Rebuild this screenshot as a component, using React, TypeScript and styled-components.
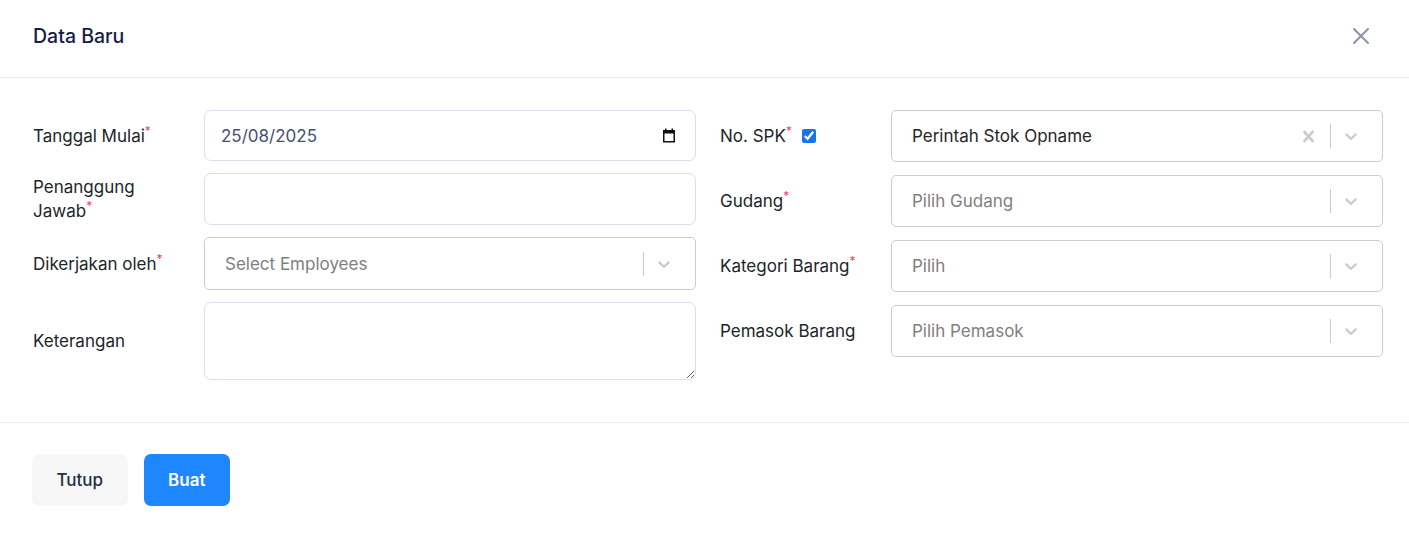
import React from "react";
import styled, { createGlobalStyle } from "styled-components";

const GlobalStyle = createGlobalStyle`
  html, body {
    margin: 0;
    padding: 0;
    background: #ffffff;
    font-family: Inter, "Noto Sans", "Liberation Sans", sans-serif;
  }
  * {
    box-sizing: border-box;
  }
`;

const Modal = styled.div`
  width: 1409px;
  background: #fff;
  display: flex;
  flex-direction: column;
  > * {
    flex-shrink: 0;
  }
`;

const Header = styled.div`
  height: 78px;
  display: flex;
  align-items: center;
  justify-content: space-between;
  padding: 0 37px 0 33px;
  border-bottom: 1px solid #e9ebf0;
`;

const Title = styled.h5`
  margin: 0;
  font-size: 19.5px;
  font-weight: 500;
  color: #14204a;
  padding-bottom: 6px;
`;

const CloseButton = styled.button`
  border: none;
  background: transparent;
  padding: 0;
  width: 22px;
  height: 22px;
  display: flex;
  align-items: center;
  justify-content: center;
  color: #8b93ab;
  cursor: pointer;
  margin-bottom: 5px;
`;

const Body = styled.div`
  display: grid;
  grid-template-columns: 1fr 1fr;
  column-gap: 24px;
  padding: 32px 26px 42px 33px;
  border-bottom: 1px solid #eef0f3;
`;

const Column = styled.div<{ $gap: number }>`
  display: flex;
  flex-direction: column;
  gap: ${(p) => p.$gap}px;
`;

const Row = styled.div`
  display: grid;
  grid-template-columns: 171px 1fr;
  align-items: center;
`;

const Label = styled.label`
  font-size: 17px;
  line-height: 24px;
  color: #212529;
  display: flex;
  align-items: center;
  gap: 10px;
  padding-right: 24px;
`;

const Req = styled.sup`
  color: #f0436a;
  font-size: 12px;
  line-height: 0;
  vertical-align: super;
`;

const Check = styled.input`
  width: 14px;
  height: 14px;
  margin: 0;
  accent-color: #1a73e8;
`;

const FieldBox = styled.div<{ $h: number }>`
  height: ${(p) => p.$h}px;
  border: 1px solid #dcdeec;
  border-radius: 7px;
  display: flex;
  align-items: center;
  padding: 0 19px 0 16px;
  background: #fff;
`;

const PlainInput = styled.input`
  flex: 1;
  border: none;
  outline: none;
  background: transparent;
  font-family: inherit;
  font-size: 17px;
  color: #465073;
  padding: 0;
  min-width: 0;
`;

const TextArea = styled.textarea`
  height: 78px;
  border: 1px solid #dcdeec;
  border-radius: 7px;
  font-family: inherit;
  font-size: 17px;
  padding: 12px 16px;
  resize: vertical;
  outline: none;
  display: block;
  width: 100%;
`;

const Select = styled.div<{ $h: number }>`
  height: ${(p) => p.$h}px;
  border: 1px solid #cccccc;
  border-radius: 5px;
  display: flex;
  align-items: center;
  background: #fff;
`;

const SelectValue = styled.div<{ $placeholder?: boolean }>`
  flex: 1;
  padding-left: 20px;
  font-size: 17px;
  color: ${(p) => (p.$placeholder ? "#808080" : "#262626")};
  white-space: nowrap;
  overflow: hidden;
`;

const Indicators = styled.div`
  display: flex;
  align-items: center;
  height: 100%;
  padding-right: 11px;
`;

const Indicator = styled.span<{ $w: number }>`
  width: ${(p) => p.$w}px;
  display: flex;
  align-items: center;
  justify-content: center;
  color: #cccccc;
`;

const Separator = styled.span`
  width: 1px;
  height: 24px;
  background: #cccccc;
`;

const Footer = styled.div`
  display: flex;
  gap: 16px;
  padding: 31px 32px;
`;

const Button = styled.button<{ $primary?: boolean }>`
  height: 52px;
  padding: 0 24.5px;
  border: none;
  border-radius: 7px;
  font-family: inherit;
  font-size: 17px;
  font-weight: ${(p) => (p.$primary ? 600 : 500)};
  background: ${(p) => (p.$primary ? "#1e86ff" : "#f7f7f8")};
  color: ${(p) => (p.$primary ? "#ffffff" : "#272d43")};
  cursor: pointer;
`;

const Chevron = () => (
  <svg width="20" height="20" viewBox="0 0 20 20" fill="currentColor">
    <path d="M4.516 7.548c0.436-0.446 1.043-0.481 1.576 0l3.908 3.747 3.908-3.747c0.533-0.481 1.141-0.446 1.574 0 0.436 0.445 0.408 1.197 0 1.615-0.406 0.418-4.695 4.502-4.695 4.502-0.217 0.223-0.502 0.335-0.787 0.335s-0.57-0.112-0.789-0.335c0 0-4.287-4.084-4.695-4.502s-0.436-1.17 0-1.615z" />
  </svg>
);

const ClearX = () => (
  <svg width="23" height="23" viewBox="0 0 20 20" fill="currentColor">
    <path d="M14.348 14.849c-0.469 0.469-1.229 0.469-1.697 0l-2.651-3.030-2.651 3.029c-0.469 0.469-1.229 0.469-1.697 0-0.469-0.469-0.469-1.229 0-1.697l2.758-3.15-2.759-3.152c-0.469-0.469-0.469-1.228 0-1.697s1.228-0.469 1.697 0l2.652 3.031 2.651-3.031c0.469-0.469 1.228-0.469 1.697 0s0.469 1.229 0 1.697l-2.758 3.152 2.758 3.15c0.469 0.469 0.469 1.229 0 1.698z" />
  </svg>
);

const CalendarIcon = () => (
  <svg width="14" height="15" viewBox="0 0 14 15" fill="none">
    <rect x="1.75" y="2.75" width="10.5" height="11" stroke="#111" strokeWidth="1.5" />
    <rect x="1" y="2" width="12" height="3.5" fill="#111" />
    <rect x="3" y="0.5" width="1.5" height="2.5" fill="#111" />
    <rect x="9.5" y="0.5" width="1.5" height="2.5" fill="#111" />
  </svg>
);

type SelectProps = { value: string; placeholder?: boolean; clearable?: boolean; h?: number };

const SelectBox = ({ value, placeholder, clearable, h = 52.4 }: SelectProps) => (
  <Select $h={h}>
    <SelectValue $placeholder={placeholder}>{value}</SelectValue>
    <Indicators>
      {clearable && (
        <Indicator $w={44}>
          <ClearX />
        </Indicator>
      )}
      <Separator />
      <Indicator $w={40}>
        <Chevron />
      </Indicator>
    </Indicators>
  </Select>
);

export default function App() {
  return (
    <>
      <GlobalStyle />
      <Modal>
        <Header>
          <Title>Data Baru</Title>
          <CloseButton aria-label="close">
            <svg width="18" height="18" viewBox="0 0 18 18" stroke="currentColor" strokeWidth="2" strokeLinecap="round">
              <path d="M2 2 L16 16 M16 2 L2 16" />
            </svg>
          </CloseButton>
        </Header>

        <Body>
          <Column $gap={12}>
            <Row>
              <Label>
                <span>
                  Tanggal Mulai<Req>*</Req>
                </span>
              </Label>
              <FieldBox $h={51}>
                <PlainInput defaultValue="25/08/2025" />
                <CalendarIcon />
              </FieldBox>
            </Row>
            <Row>
              <Label>
                <span>
                  Penanggung Jawab<Req>*</Req>
                </span>
              </Label>
              <FieldBox $h={52}>
                <PlainInput />
              </FieldBox>
            </Row>
            <Row>
              <Label>
                <span>
                  Dikerjakan oleh<Req>*</Req>
                </span>
              </Label>
              <SelectBox value="Select Employees" placeholder h={53} />
            </Row>
            <Row>
              <Label>Keterangan</Label>
              <TextArea />
            </Row>
          </Column>

          <Column $gap={12.5}>
            <Row>
              <Label>
                <span>
                  No. SPK<Req>*</Req>
                </span>
                <Check type="checkbox" defaultChecked />
              </Label>
              <SelectBox value="Perintah Stok Opname" clearable />
            </Row>
            <Row>
              <Label>
                <span>
                  Gudang<Req>*</Req>
                </span>
              </Label>
              <SelectBox value="Pilih Gudang" placeholder />
            </Row>
            <Row>
              <Label>
                <span>
                  Kategori Barang<Req>*</Req>
                </span>
              </Label>
              <SelectBox value="Pilih" placeholder />
            </Row>
            <Row>
              <Label>Pemasok Barang</Label>
              <SelectBox value="Pilih Pemasok" placeholder />
            </Row>
          </Column>
        </Body>

        <Footer>
          <Button>Tutup</Button>
          <Button $primary>Buat</Button>
        </Footer>
      </Modal>
    </>
  );
}
